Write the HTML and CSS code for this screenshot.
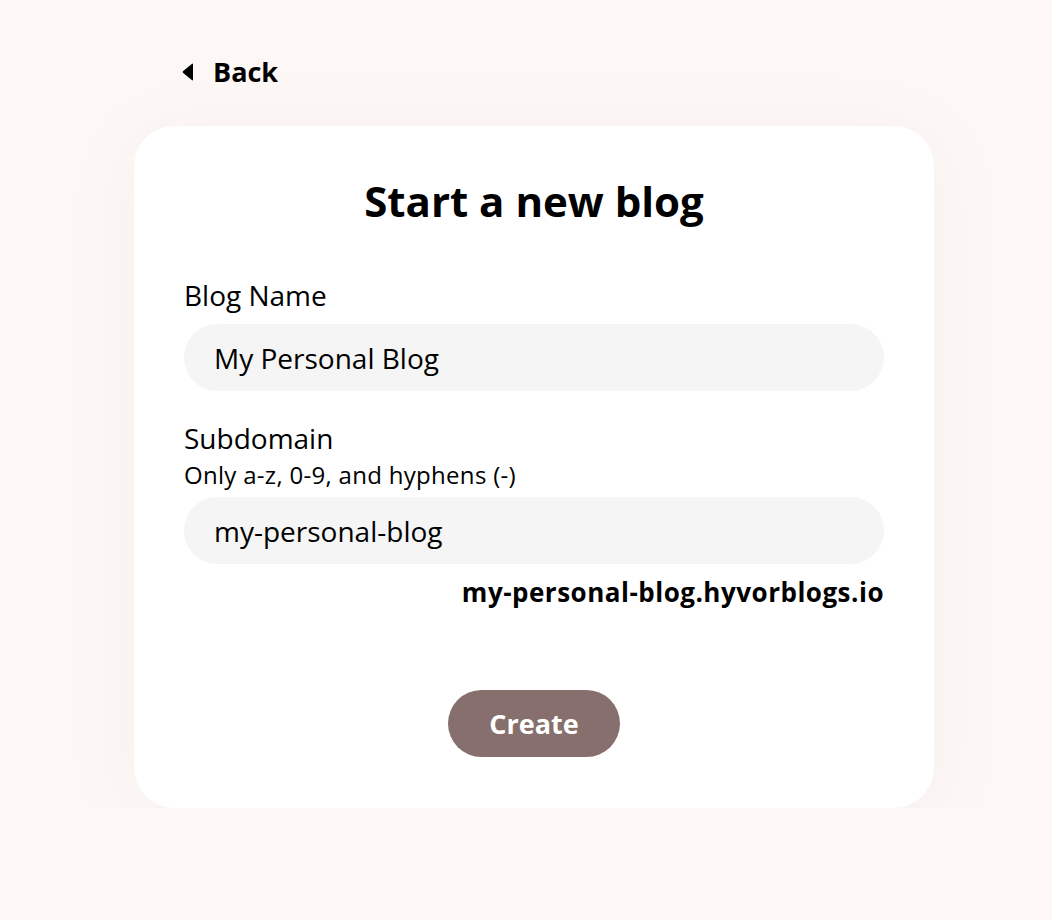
FILE: index.html
```html
<!DOCTYPE html>
<html lang="en">
<head>
    <meta charset="UTF-8">
    <meta name="viewport" content="width=device-width, initial-scale=1.0">
    <title>Start a new blog</title>
    <link rel="stylesheet" href="styles.css">
</head>
<body>
    <div class="page">
        <!-- back link -->
        <a class="back" href="#">
            <svg class="back-icon" width="12" height="18" viewBox="0 0 12 18">
                <path d="M11 1.5 L11 16.5 Q11 18 9.8 17.1 L1.2 10.1 Q0 9 1.2 7.9 L9.8 0.9 Q11 0 11 1.5 Z" fill="#000"/>
            </svg>
            Back
        </a>

        <div class="card">
            <h1 class="title">Start a new blog</h1>

            <form class="new-blog">
                <div class="field">
                    <label class="label" for="name">Blog Name</label>
                    <input class="input" type="text" id="name" value="My Personal Blog">
                </div>

                <div class="field">
                    <label class="label" for="subdomain">Subdomain</label>
                    <div class="hint">Only a-z, 0-9, and hyphens (-)</div>
                    <input class="input" type="text" id="subdomain" value="my-personal-blog">
                    <div class="domain">my-personal-blog.hyvorblogs.io</div>
                </div>

                <div class="actions">
                    <button type="submit" class="create">Create</button>
                </div>
            </form>
        </div>
    </div>
</body>
</html>
```

FILE: styles.css
```css
* {
    margin: 0px;
    padding: 0px;
    box-sizing: border-box;
}

body {
    background-color: #fdf8f6;
    font-family: "Open Sans", "Noto Sans", sans-serif;
    color: #000;
}

.page {
    width: 800px;
    margin-left: 134px;
    padding-top: 54px;
}

.back {
    display: inline-flex;
    align-items: center;
    gap: 19px;
    margin-left: 48px;
    color: #000;
    text-decoration: none;
    font-weight: bold;
    font-size: 27px;
    line-height: 36px;
}

.back-icon {
    display: block;
}

.card {
    margin-top: 36px;
    background-color: #fff;
    border-radius: 40px;
    padding: 47px 50px 51px 50px;
    box-shadow: 0 10px 80px rgba(120, 90, 80, 0.06);
}

.title {
    text-align: center;
    font-size: 42px;
    font-weight: bold;
    line-height: 56px;
}

.new-blog {
    margin-top: 49px;
}

.field {
    margin-bottom: 30px;
}

.label {
    display: block;
    font-size: 28px;
    line-height: 34px;
}

.hint {
    font-size: 24px;
    letter-spacing: 0.3px;
    line-height: 28px;
    margin-top: 6px;
    margin-bottom: -4px;
}

.input {
    display: block;
    width: 100%;
    height: 67px;
    margin-top: 12px;
    border: none;
    border-radius: 34px;
    background-color: #f5f5f5;
    padding: 0 30px;
    font-family: inherit;
    font-size: 28px;
    color: #000;
    outline: none;
}

.domain {
    text-align: right;
    font-weight: bold;
    font-size: 26px;
    letter-spacing: 0.5px;
    line-height: 32px;
    margin-top: 12px;
}

.actions {
    text-align: center;
    padding-top: 52px;
}

.create {
    border: none;
    border-radius: 34px;
    background-color: #866f6c;
    color: #fff;
    font-family: inherit;
    font-weight: bold;
    font-size: 27px;
    width: 172px;
    height: 67px;
}
```
